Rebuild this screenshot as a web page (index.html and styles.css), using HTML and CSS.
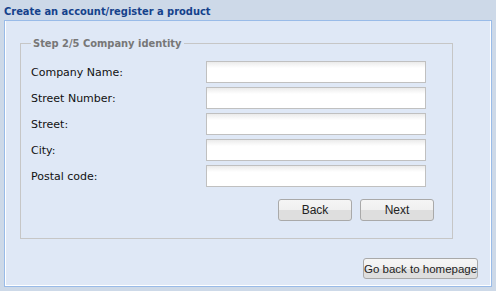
FILE: index.html
```html
<!DOCTYPE html>
<html lang="en">
<head>
    <meta charset="UTF-8">
    <title>Create an account</title>
    <link rel="stylesheet" href="styles.css">
</head>
<body>
    <h1 class="title">Create an account/register a product</h1>
    <div class="panel">
        <fieldset class="step">
            <legend>Step 2/5 Company identity</legend>
            <div class="fields">
                <label for="company">Company Name:</label>
                <input type="text" id="company">
                <label for="number">Street Number:</label>
                <input type="text" id="number">
                <label for="street">Street:</label>
                <input type="text" id="street">
                <label for="city">City:</label>
                <input type="text" id="city">
                <label for="postal">Postal code:</label>
                <input type="text" id="postal">
            </div>
            <div class="actions">
                <button type="button" class="btn">Back</button>
                <button type="button" class="btn">Next</button>
            </div>
        </fieldset>
        <div class="footer">
            <button type="button" class="btn btn-home">Go back to homepage</button>
        </div>
    </div>
</body>
</html>
```
FILE: styles.css
```css
body {
    margin: 0;
    background-color: #cdd9e8;
    font-family: "DejaVu Sans", Verdana, sans-serif;
    font-size: 11px;
}

.title {
    margin: 0;
    padding: 5px 4px 1px;
    height: 14px;
    line-height: 14px;
    font-family: "DejaVu Sans Condensed", "DejaVu Sans", sans-serif;
    font-size: 11px;
    font-weight: bold;
    color: #15428b;
}

.panel {
    margin: 0 4px 2px;
    height: 267px;
    box-sizing: border-box;
    background-color: #dfe8f6;
    border: 1px solid #99bbe8;
    box-shadow: inset 1px 0 0 #fff, inset -1px -1px 0 #fff;
    padding: 16px 0 0 15px;
}

.step {
    margin: 0;
    width: 433px;
    box-sizing: border-box;
    border: 1px solid #c6c6c6;
    padding: 11px 0 17px 10px;
}

.step legend {
    padding: 0 2px;
    margin-left: 0;
    font-family: "DejaVu Sans Condensed", "DejaVu Sans", sans-serif;
    font-weight: bold;
    color: #777;
}

.fields {
    display: grid;
    grid-template-columns: 175px 220px;
    row-gap: 4px;
    align-items: center;
}

.fields label {
    color: #111;
}

.fields input {
    height: 22px;
    box-sizing: border-box;
    margin: 0;
    border: 1px solid #c0c0c0;
    background: linear-gradient(#ebebeb, #fff 6px);
    padding: 0 4px;
}

.actions {
    display: flex;
    gap: 8px;
    padding-left: 247px;
    margin-top: 12px;
}

.btn {
    width: 74px;
    height: 22px;
    margin: 0;
    padding: 0;
    border: 1px solid #a9a9a9;
    border-radius: 3px;
    background: linear-gradient(#f5f5f5 0, #f0f0f0 50%, #dedede 50%, #dedede 100%);
    font-family: "Liberation Sans", Arial, sans-serif;
    font-size: 12px;
    color: #222;
    white-space: nowrap;
}

.footer {
    display: flex;
    justify-content: flex-end;
    padding-right: 13px;
    margin-top: 19px;
}

.btn-home {
    width: 115px;
    height: 21px;
    font-size: 11.5px;
}
```
